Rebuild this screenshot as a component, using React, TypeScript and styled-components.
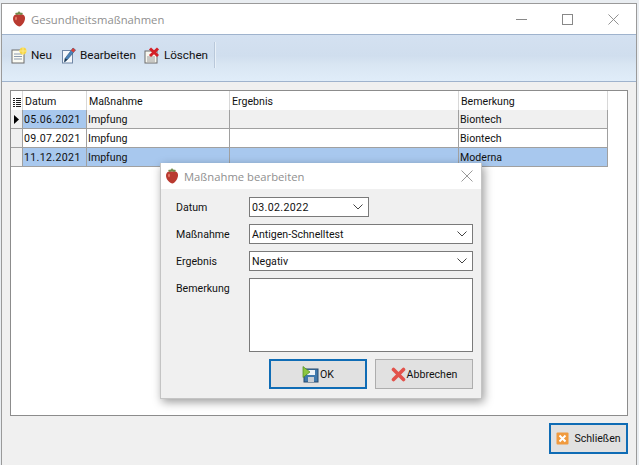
import React from 'react';
import styled, { createGlobalStyle } from 'styled-components';

const GlobalStyle = createGlobalStyle`
    html, body {
        margin: 0;
        padding: 0;
        background: #e9edf1;
        overflow: hidden;
    }
`;

const Screen = styled.div`
    position: relative;
    width: 639px;
    height: 465px;
    padding: 3px 2px 0 1px;
    box-sizing: border-box;
    font-family: Roboto, "Liberation Sans", sans-serif;
    font-size: 10.6px;
    color: #111;
`;

const Win = styled.div`
    height: 462px;
    display: flex;
    flex-direction: column;
    background: #f0f0f0;
    border: 1px solid #9a9a9a;
    border-bottom: none;
    box-sizing: border-box;
`;

const TitleBar = styled.div`
    height: 30px;
    flex: none;
    display: flex;
    align-items: center;
    background: #fff;
    padding-left: 10px;
    gap: 5px;
`;

const TitleText = styled.span`
    font-family: "Open Sans", "Noto Sans", sans-serif;
    font-size: 11.25px;
    color: #8f8f8f;
`;

const WinButtons = styled.div`
    margin-left: auto;
    display: flex;
    align-items: center;
    color: #8a8a8a;
`;

const WinButton = styled.div`
    width: 46px;
    height: 30px;
    display: flex;
    align-items: center;
    justify-content: center;
`;

const Toolbar = styled.div`
    height: 48px;
    flex: none;
    display: flex;
    align-items: center;
    padding: 0 0 6px 9px;
    box-sizing: border-box;
    border-top: 1px solid #9fb3cd;
    border-bottom: 1px solid #9fb3cd;
    background: linear-gradient(#d4e1f1 0%, #d0deee 45%, #d9e6f3 65%, #e0edf9 100%);
`;

const ToolButton = styled.div`
    display: flex;
    align-items: center;
    gap: 4px;
    margin-right: 8px;
    font-size: 11.7px;
`;

const ToolSep = styled.div`
    width: 1px;
    height: 26px;
    margin-left: -2px;
    background: #b9c8da;
    box-shadow: 1px 0 0 #e8f0f8;
`;

const Body = styled.div`
    flex: 1;
    display: flex;
    flex-direction: column;
    padding: 8px 8px 7px 8px;
    min-height: 0;
`;

const GridPanel = styled.div`
    height: 326px;
    flex: none;
    background: #fff;
    border: 1px solid #8c8c8c;
    box-sizing: border-box;
`;

const GridRow = styled.div`
    display: grid;
    grid-template-columns: 12px 64px 143px 229px 149px;
    height: 19px;
    box-sizing: border-box;
`;

const Indicator = styled.div<{ $header?: boolean }>`
    display: flex;
    align-items: center;
    justify-content: center;
    background: ${p => (p.$header ? '#fff' : '#f0f0f0')};
    border-bottom: ${p => (p.$header ? 'none' : '1px solid #a0a0a0')};
    border-right: 1px solid ${p => (p.$header ? '#d8d8d8' : '#a0a0a0')};
`;

const HeadCell = styled.div`
    padding-left: 2px;
    line-height: 21px;
    border-right: 1px solid #d8d8d8;
    white-space: nowrap;
`;

const Cell = styled.div<{ $bg: string; $date?: boolean }>`
    padding-left: 1px;
    line-height: 20px;
    letter-spacing: ${p => (p.$date ? '0.35px' : 'normal')};
    background: ${p => p.$bg};
    border-right: 1px solid #a0a0a0;
    border-bottom: 1px solid #a0a0a0;
    white-space: nowrap;
    overflow: hidden;
`;

const Footer = styled.div`
    margin-top: 7px;
    display: flex;
    justify-content: flex-end;
`;

const Button = styled.div<{ $primary?: boolean; $w: number; $h: number }>`
    width: ${p => p.$w}px;
    height: ${p => p.$h}px;
    box-sizing: border-box;
    display: flex;
    align-items: center;
    justify-content: center;
    gap: 1px;
    background: #e1e1e1;
    border: ${p => (p.$primary ? '2px solid #0f6cb5' : '1px solid #adadad')};
`;

const CloseLabel = styled.span`
    margin-left: 4px;
`;

const Dialog = styled.div`
    position: absolute;
    left: 160px;
    top: 163px;
    width: 322px;
    height: 236px;
    background: #f0f0f0;
    border: 1px solid #c4c4c4;
    border-top: none;
    box-sizing: border-box;
    box-shadow: 2px 3px 9px rgba(0, 0, 0, 0.4);
    display: flex;
    flex-direction: column;
`;

const DialogTitle = styled.div`
    height: 26px;
    flex: none;
    display: flex;
    align-items: center;
    gap: 5px;
    padding: 0 8px 0 4px;
    background: #fff;
`;

const DialogClose = styled.div`
    margin-left: auto;
    display: flex;
`;

const Form = styled.div`
    display: grid;
    grid-template-columns: 73px 224px;
    grid-auto-rows: min-content;
    row-gap: 7px;
    padding: 8px 0 0 15px;
    align-items: center;
`;

const Label = styled.div<{ $top?: boolean }>`
    align-self: ${p => (p.$top ? 'start' : 'center')};
    margin-top: ${p => (p.$top ? 4 : 0)}px;
`;

const Select = styled.div<{ $w: number; $date?: boolean }>`
    width: ${p => p.$w}px;
    height: 20px;
    box-sizing: border-box;
    background: #fff;
    border: 1px solid #7a7a7a;
    display: flex;
    align-items: center;
    justify-content: space-between;
    padding: 0 5px 0 2px;
    letter-spacing: ${p => (p.$date ? '0.35px' : 'normal')};
`;

const Memo = styled.div`
    width: 224px;
    height: 74px;
    box-sizing: border-box;
    background: #fff;
    border: 1px solid #7a7a7a;
`;

const DialogButtons = styled.div`
    display: flex;
    gap: 8px;
    padding: 7px 0 0 108px;
`;

const Chevron = () => (
    <svg width="10" height="6" viewBox="0 0 10 6" fill="none" stroke="#444" strokeWidth="1">
        <path d="M0.5 0.5 L5 5 L9.5 0.5" />
    </svg>
);

const Strawberry = () => (
    <svg width="14" height="16" viewBox="0 0 14 16">
        <path d="M7 3.5 C11 2.5 13.5 4.5 13 8 C12.5 11.5 9.5 15.5 7.5 15.5 C5 15.5 1.2 11.5 1 8 C0.8 4.5 3.5 2.5 7 3.5Z" fill="#b93a30" />
        <path d="M3.5 6 C4.5 5 5.5 7 4.5 9 C3.5 10 2.5 7.5 3.5 6Z" fill="#e8806e" />
        <path d="M3 2 L6 1.5 L7 0 L8 1.5 L11 2 L9.5 4 L7 3.2 L4.5 4Z" fill="#6f8a4a" />
    </svg>
);

const NewIcon = () => (
    <svg width="16" height="17" viewBox="0 0 16 17">
        <rect x="1" y="3" width="12" height="13" fill="#fbfbf3" stroke="#6d6d6d" />
        <path d="M3 7h8M3 9.5h8M3 12h8" stroke="#8c9bb0" />
        <circle cx="12" cy="4" r="3.4" fill="#f6d545" />
        <path d="M12 0v8M8 4h8" stroke="#fbe98c" />
    </svg>
);

const EditIcon = () => (
    <svg width="16" height="17" viewBox="-2 0 16 17">
        <rect x="0.5" y="3.5" width="10" height="12.5" fill="#f4f7fb" stroke="#6f86a5" />
        <path d="M11 1 L13.5 3 L5.5 12.5 L2.5 15 L3 11.5Z" fill="#4c82b8" stroke="#2f5577" strokeWidth="0.6" />
        <path d="M11 1 L13.5 3 L11.5 5.5 L9 3.4Z" fill="#d8403a" />
        <path d="M3 11.5 L5.5 12.5 L2.5 15Z" fill="#1f3448" />
    </svg>
);

const DeleteIcon = () => (
    <svg width="16" height="17" viewBox="0 0 16 17">
        <rect x="1" y="4" width="12" height="12" fill="#f7f7ef" stroke="#6d6d6d" />
        <path d="M3 10h8M3 12h8M3 14h8" stroke="#9a9a9a" />
        <path d="M6 1.5 L14 9 M14 1.5 L6 9" stroke="#d41f26" strokeWidth="3" />
    </svg>
);

const SaveIcon = () => (
    <svg width="17" height="17" viewBox="0 0 17 17">
        <rect x="2" y="3" width="14" height="13" fill="#3f79ad" stroke="#274a6e" />
        <rect x="5" y="4" width="8" height="5" fill="#eef3f8" />
        <rect x="6" y="11" width="6" height="5" fill="#c9ced4" />
        <path d="M1 0.5 L8 6 L1 11.5Z" fill="#8cc63f" stroke="#4f8a1e" strokeWidth="0.7" />
    </svg>
);

const CancelIcon = () => (
    <svg width="15" height="15" viewBox="0 0 15 15">
        <path d="M2.5 2.5 L12.5 12.5 M12.5 2.5 L2.5 12.5" stroke="#e2524b" strokeWidth="3.6" strokeLinecap="round" />
    </svg>
);

const CloseIcon = () => (
    <svg width="13" height="13" viewBox="0 0 13 13">
        <rect x="0.5" y="0.5" width="12" height="12" rx="1" fill="#f09a3e" />
        <path d="M3.5 3.5 L9.5 9.5 M9.5 3.5 L3.5 9.5" stroke="#fff" strokeWidth="2" />
    </svg>
);

const Cross = ({ size, color }: { size: number; color: string }) => (
    <svg width={size} height={size} viewBox="0 0 12 12" stroke={color} strokeWidth="1" fill="none">
        <path d="M0.5 0.5 L11.5 11.5 M11.5 0.5 L0.5 11.5" />
    </svg>
);

const columns = ['Datum', 'Maßnahme', 'Ergebnis', 'Bemerkung'];

const rows = [
    { datum: '05.06.2021', massnahme: 'Impfung', ergebnis: '', bemerkung: 'Biontech', first: '#a8c8ee', rest: '#f0f0f0' },
    { datum: '09.07.2021', massnahme: 'Impfung', ergebnis: '', bemerkung: 'Biontech', first: '#ffffff', rest: '#ffffff' },
    { datum: '11.12.2021', massnahme: 'Impfung', ergebnis: '', bemerkung: 'Moderna', first: '#a8c8ee', rest: '#a8c8ee' },
];

const App = () => {
    return (
        <Screen>
            <GlobalStyle />
            <Win>
                <TitleBar>
                    <Strawberry />
                    <TitleText>Gesundheitsmaßnahmen</TitleText>
                    <WinButtons>
                        <WinButton>
                            <svg width="11" height="1"><rect width="11" height="1" fill="#888" /></svg>
                        </WinButton>
                        <WinButton>
                            <svg width="11" height="11"><rect x="0.5" y="0.5" width="10" height="10" fill="none" stroke="#888" /></svg>
                        </WinButton>
                        <WinButton>
                            <Cross size={11} color="#888" />
                        </WinButton>
                    </WinButtons>
                </TitleBar>
                <Toolbar>
                    <ToolButton><NewIcon />Neu</ToolButton>
                    <ToolButton><EditIcon />Bearbeiten</ToolButton>
                    <ToolButton><DeleteIcon />Löschen</ToolButton>
                    <ToolSep />
                </Toolbar>
                <Body>
                    <GridPanel>
                        <GridRow>
                            <Indicator $header>
                                <svg width="8" height="10" viewBox="0 0 8 10">
                                    <path d="M0 1.5h2M3 1.5h5M0 3.5h2M3 3.5h5M0 5.5h2M3 5.5h5M0 7.5h2M3 7.5h5M0 9.5h2M3 9.5h5" stroke="#222" />
                                </svg>
                            </Indicator>
                            {columns.map(c => <HeadCell key={c}>{c}</HeadCell>)}
                        </GridRow>
                        {rows.map((r, i) => (
                            <GridRow key={r.datum}>
                                <Indicator>
                                    {i === 0 && (
                                        <svg width="5" height="9" viewBox="0 0 5 9"><path d="M0 0 L5 4.5 L0 9Z" fill="#000" /></svg>
                                    )}
                                </Indicator>
                                <Cell $bg={r.first} $date>{r.datum}</Cell>
                                <Cell $bg={r.rest}>{r.massnahme}</Cell>
                                <Cell $bg={r.rest}>{r.ergebnis}</Cell>
                                <Cell $bg={r.rest}>{r.bemerkung}</Cell>
                            </GridRow>
                        ))}
                    </GridPanel>
                    <Footer>
                        <Button $primary $w={79} $h={31}>
                            <CloseIcon />
                            <CloseLabel>Schließen</CloseLabel>
                        </Button>
                    </Footer>
                </Body>
            </Win>
            <Dialog>
                <DialogTitle>
                    <Strawberry />
                    <TitleText>Maßnahme bearbeiten</TitleText>
                    <DialogClose><Cross size={12} color="#999" /></DialogClose>
                </DialogTitle>
                <Form>
                    <Label>Datum</Label>
                    <Select $w={120} $date>03.02.2022<Chevron /></Select>
                    <Label>Maßnahme</Label>
                    <Select $w={224}>Antigen-Schnelltest<Chevron /></Select>
                    <Label>Ergebnis</Label>
                    <Select $w={224}>Negativ<Chevron /></Select>
                    <Label $top>Bemerkung</Label>
                    <Memo />
                </Form>
                <DialogButtons>
                    <Button $primary $w={98} $h={30}><SaveIcon />OK</Button>
                    <Button $w={98} $h={30}><CancelIcon />Abbrechen</Button>
                </DialogButtons>
            </Dialog>
        </Screen>
    );
};

export default App;
